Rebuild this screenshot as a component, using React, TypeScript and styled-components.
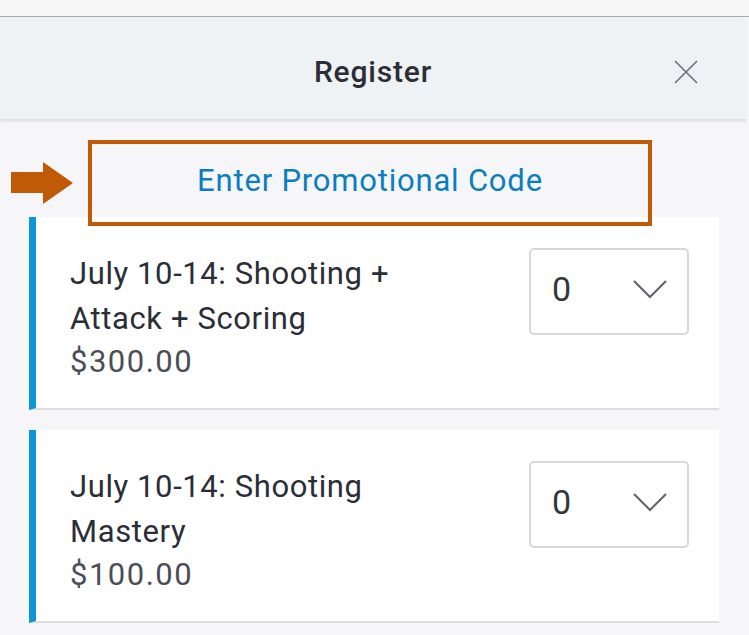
import { createGlobalStyle, styled } from "styled-components";

const GlobalStyle = createGlobalStyle`
	html, body {
		margin: 0;
		padding: 0;
		background: #f6f6f8;
		font-family: Roboto, "Liberation Sans", sans-serif;
	}
`

const TopStrip = styled.div`
	height: 16px;
	background: #f7f7f7;
	border-bottom: 1px solid #a9acb1;
`

const Modal = styled.div`
	width: 746px;
	background: #f6f6f8;
`

const Header = styled.header`
	display: grid;
	grid-template-columns: 1fr auto 1fr;
	align-items: center;
	height: 103px;
	padding-top: 7px;
	background: #eef2f5;
	border-top-right-radius: 6px;
	box-shadow: 0 2px 2px rgba(0, 0, 0, 0.08);
	border-bottom: 1px solid #dfe1e4;
	box-sizing: border-box;
`

const Title = styled.h1`
	grid-column: 2;
	margin: 0;
	font-size: 30px;
	font-weight: 500;
	color: #2b2e35;
	letter-spacing: 0.8px;
`

const CloseButton = styled.button`
	justify-self: end;
	margin-right: 48px;
	padding: 0;
	border: 0;
	background: none;
	display: flex;
	cursor: pointer;
`

const Body = styled.div`
	padding-top: 20px;
	padding-bottom: 12px;
`

const PromoRow = styled.div`
	display: flex;
	align-items: center;
	gap: 15px;
	padding-left: 10px;
	margin-bottom: -9px;
	position: relative;
	z-index: 1;
`

const PromoBox = styled.button`
	width: 564px;
	height: 86px;
	padding: 0 0 6px;
	box-sizing: border-box;
	border: 4px solid #c05a06;
	background: transparent;
	color: #0a7ec2;
	font-family: Roboto, "Liberation Sans", sans-serif;
	font-size: 31px;
	letter-spacing: 0.8px;
	cursor: pointer;
`

const Cards = styled.div`
	display: flex;
	flex-direction: column;
	gap: 20px;
	margin-left: 29px;
	width: 690px;
`

const Card = styled.div`
	display: flex;
	justify-content: space-between;
	align-items: flex-start;
	background: #fff;
	border-left: 7px solid #0a96d8;
	border-bottom: 2px solid #dcdde1;
	padding: 34px 30px 25px 34px;
`

const Info = styled.div`
	display: flex;
	flex-direction: column;
	max-width: 350px;
`

const Name = styled.div`
	font-size: 31px;
	line-height: 45px;
	letter-spacing: 0.6px;
	color: #2b2e36;
`

const Price = styled.div`
	font-size: 31px;
	line-height: 42px;
	letter-spacing: 1.5px;
	color: #4b4e56;
`

const Select = styled.div`
	display: flex;
	align-items: center;
	justify-content: space-between;
	width: 160px;
	height: 87px;
	margin-top: -3px;
	box-sizing: border-box;
	border: 2px solid #d6d8de;
	border-radius: 5px;
	padding: 0 20px 6px 21px;
	font-size: 34px;
	color: #33363d;
`

const tickets = [
	{ name: "July 10-14: Shooting + Attack + Scoring", price: "$300.00" },
	{ name: "July 10-14: Shooting Mastery", price: "$100.00" },
];

function Chevron() {
	return (
		<svg width="34" height="20" viewBox="0 0 34 20" fill="none">
			<path d="M1 2 L17 18 L33 2" stroke="#5f6269" strokeWidth="2" />
		</svg>
	)
}

export default function App() {
	return (
		<>
			<GlobalStyle />
			<TopStrip />
			<Modal>
				<Header>
					<Title>Register</Title>
					<CloseButton aria-label="Close">
						<svg width="24" height="24" viewBox="0 0 24 24">
							<path d="M1 1 L23 23 M23 1 L1 23" stroke="#6b6e75" strokeWidth="1.6" />
						</svg>
					</CloseButton>
				</Header>
				<Body>
					<PromoRow>
						<svg width="63" height="42" viewBox="0 0 63 42">
							<polygon points="1,10 33,10 33,0 63,21 33,42 33,31 1,31" fill="#c05a06" />
						</svg>
						<PromoBox>Enter Promotional Code</PromoBox>
					</PromoRow>
					<Cards>
						{tickets.map((t) => (
							<Card key={t.name}>
								<Info>
									<Name>{t.name}</Name>
									<Price>{t.price}</Price>
								</Info>
								<Select>
									<span>0</span>
									<Chevron />
								</Select>
							</Card>
						))}
					</Cards>
				</Body>
			</Modal>
		</>
	)
}
